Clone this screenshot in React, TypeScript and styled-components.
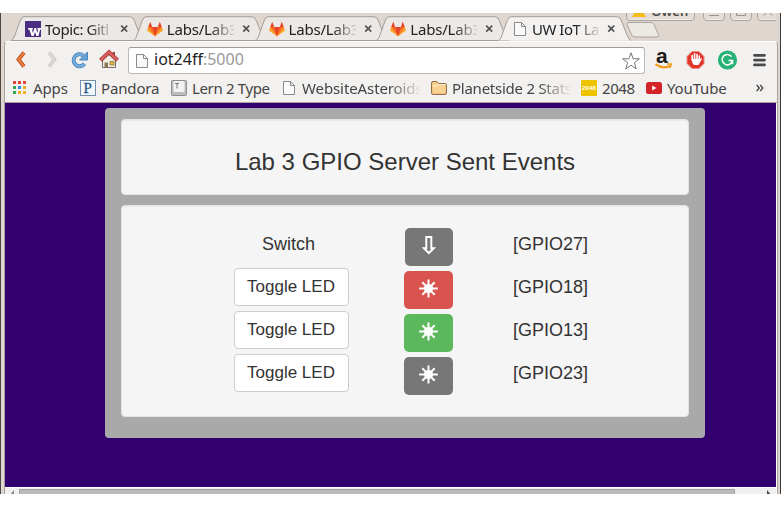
import React from 'react';
import styled, { createGlobalStyle } from 'styled-components';

const GlobalStyle = createGlobalStyle`
  * { box-sizing: border-box; }
  body { margin: 0; background: #fff; }
  svg { display: block; flex: none; }
`;

const Screen = styled.div`
  width: 781px;
  height: 507px;
  padding-top: 13px;
  overflow: hidden;
  background: #fff;
  font-family: 'Noto Sans', 'Open Sans', sans-serif;
  color: #333;
`;

const Window = styled.div`
  height: 481px;
  overflow: hidden;
  background: #dfd6cf;
  border-left: 1px solid #4a4744;
  border-right: 1px solid #3d3b3a;
  padding: 0 2px 0 3px;
  display: flex;
  flex-direction: column;
`;

const TabStrip = styled.div`
  height: 28px;
  display: flex;
  padding-left: 7px;
  flex: none;
`;

const TabBox = styled.div<{ $active?: boolean }>`
  position: relative;
  z-index: ${p => (p.$active ? 2 : 1)};
  width: 133px;
  height: 28px;
  margin-right: -11.25px;
  padding: 3px 0 0 14px;
  display: flex;
  align-items: center;
  flex: none;
`;

const TabShape = styled.svg`
  position: absolute;
  left: 0;
  top: 3px;
`;

const TabIcon = styled.div`
  position: relative;
  width: 16px;
  margin-right: 4px;
`;

const TabTitle = styled.div<{ $spacing: number }>`
  position: relative;
  width: 67px;
  height: 22px;
  line-height: 22px;
  overflow: hidden;
  white-space: nowrap;
  font-size: 15px;
  letter-spacing: ${p => p.$spacing}px;
  color: #222;
  mask-image: linear-gradient(to right, #000 43px, transparent 70px);
`;

const CloseIcon = styled.svg`
  position: relative;
  margin-left: 8px;
`;

const StripEnd = styled.div`
  margin-left: 6px;
  width: 150px;
  display: flex;
  flex-direction: column;
  gap: 1px;
`;

const WindowControls = styled.div`
  height: 8px;
  overflow: hidden;
  display: flex;
  align-items: flex-end;
  gap: 5px;
`;

const ControlButton = styled.div<{ $width: number; $gap?: number }>`
  width: ${p => p.$width}px;
  height: 20px;
  margin-right: ${p => p.$gap ?? 0}px;
  border: 1px solid #aaa39e;
  border-radius: 4px;
  background: #e4ddd7;
  display: flex;
  align-items: flex-end;
  justify-content: center;
  flex: none;
  box-shadow: inset 0 -1px #f1ece8;
`;

const UserName = styled.span`
  font-size: 13px;
  font-weight: 600;
  line-height: 17px;
  margin-left: 5px;
  color: #4d4947;
`;

const Toolbar = styled.div`
  height: 33px;
  flex: none;
  padding: 5px 0 0 11px;
  display: flex;
  align-items: flex-start;
  background: #f3f1ef;
  border-top: 1px solid #fff;
  border-left: 1px solid #a8a19c;
  border-right: 1px solid #a8a19c;
  border-radius: 4px 4px 0 0;
`;

const NavIcons = styled.div`
  width: 112px;
  height: 26px;
  display: flex;
  align-items: center;
  flex: none;
`;

const AddressBar = styled.div`
  width: 517px;
  height: 27px;
  display: flex;
  align-items: center;
  padding: 0 4px 0 5px;
  background: #fff;
  border: 1px solid #bdb9b6;
  border-top-color: #9e9a97;
  border-radius: 3px;
  flex: none;
`;

const Address = styled.div`
  flex: 1;
  margin-left: 4px;
  padding-bottom: 3px;
  font-size: 16px;
  line-height: 24px;
  color: #222;
`;

const Port = styled.span`
  color: #999;
`;

const Extensions = styled.div`
  display: flex;
  align-items: center;
  height: 26px;
  padding-left: 9px;
`;

const BookmarkBar = styled.div`
  height: 29px;
  flex: none;
  background: #f3f1ef;
  border: solid #a8a19c;
  border-width: 0 1px 1px;
  padding: 0 0 1px 8px;
  display: flex;
  align-items: center;
`;

const BookmarkItem = styled.div<{ $width: number }>`
  width: ${p => p.$width}px;
  display: flex;
  align-items: center;
  flex: none;
`;

const BookmarkText = styled.div<{ $spacing: number; $fade?: number }>`
  margin-left: 5px;
  height: 22px;
  line-height: 22px;
  font-size: 15px;
  letter-spacing: ${p => p.$spacing}px;
  white-space: nowrap;
  overflow: hidden;
  color: #444;
  ${p =>
    p.$fade
      ? `width: ${p.$fade}px; mask-image: linear-gradient(to right, #000 ${p.$fade - 32}px, transparent ${p.$fade + 2}px);`
      : ''}
`;

const Page = styled.main`
  height: 384px;
  margin-right: 2px;
  padding: 5px 0 0 100px;
  background: #330070;
  font-family: 'Liberation Sans', Arial, sans-serif;
`;

const PageFrame = styled.div`
  flex: none;
  background: linear-gradient(to right, #fff calc(100% - 1px), #a8a19c 0);
  border-left: 1px solid #a8a19c;
`;

const Container = styled.section`
  width: 600px;
  height: 330px;
  padding: 11px 16px;
  background: #a9a9a9;
  border-radius: 4px;
  display: flex;
  flex-direction: column;
  gap: 10px;
`;

const Well = styled.div<{ $height: number }>`
  height: ${p => p.$height}px;
  background: #f5f5f5;
  border: 1px solid #e3e3e3;
  border-radius: 4px;
  box-shadow: inset 0 1px 1px rgba(0, 0, 0, 0.05);
`;

const Heading = styled.h1`
  margin: 0;
  padding-top: 29px;
  font-size: 24px;
  font-weight: 400;
  line-height: 26px;
  text-align: center;
`;

const GpioGrid = styled.div`
  padding: 19px 0 0 112px;
  display: grid;
  grid-template-columns: 115px 104px 135px;
  grid-auto-rows: 43px;
  font-size: 18px;
`;

const SwitchLabel = styled.div`
  padding: 6px 0 0 28px;
  line-height: 26px;
`;

const ToggleButton = styled.button`
  width: 115px;
  height: 38px;
  padding: 0 1px 1px 0;
  font: 17px 'Liberation Sans', Arial, sans-serif;
  white-space: nowrap;
  color: #333;
  background: #fff;
  border: 1px solid #ccc;
  border-radius: 4px;
`;

const StateBadge = styled.div<{ $color: string; $narrow?: boolean }>`
  justify-self: end;
  width: ${p => (p.$narrow ? 48 : 49)}px;
  height: 38px;
  margin-top: 3px;
  padding-bottom: ${p => (p.$narrow ? 4 : 3)}px;
  display: flex;
  align-items: center;
  justify-content: center;
  background: ${p => p.$color};
  border-radius: 5px;
`;

const PinName = styled.div`
  padding: 6px 0 0 60px;
  line-height: 26px;
`;

const ScrollTrack = styled.div`
  height: 7px;
  margin-right: 2px;
  padding-top: 1px;
  border-top: 1px solid #fff;
  background: #f0efee;
  display: flex;
  justify-content: space-between;
`;

const ScrollThumb = styled.div`
  width: 716px;
  height: 12px;
  background: #bababa;
  border: 1px solid #a2a2a2;
`;

const FileIcon = () => (
  <svg width="16" height="16" viewBox="0 0 16 16" fill="#fafafa" stroke="#898989">
    <path d="M2.5 1.5h7l4 4v9h-11zM9.5 1.5v4h4" />
  </svg>
);

const UwIcon = () => (
  <svg width="16" height="16" viewBox="0 0 16 16">
    <path fill="#4b2e83" d="M0 0h16v16H0z" />
    <path fill="#fff" d="M3 7h4.800v1.500H7l.8 3.500L9.500 7h1.500l1.300 5 .9-3.500h-.9V7H16v1.500h-.8L13.400 15h-2L10 11 8.600 15h-2L4.300 8.500H3z" />
  </svg>
);

const GitlabIcon = () => (
  <svg width="16" height="16" viewBox="0 0 16 16">
    <path fill="#fca326" d="M1.200 6L0 9.500l8 5.800 8-5.800L14.800 6z" />
    <path fill="#fc6d26" d="M1.200 6L8 15.300 14.800 6z" />
    <path fill="#e24329" d="M1.200 6L3.200.8 5.200 6zM10.800 6l2-5.200 2 5.200zM5.200 6h5.600L8 15.300z" />
  </svg>
);

const Tab = ({ icon, title, spacing = -0.2, active }: { icon: React.ReactNode; title: string; spacing?: number; active?: boolean }) => (
  <TabBox $active={active}>
    <TabShape width="133" height="25" viewBox="0 0 133 25">
      <path
        d="M0 24.500C2 24 3 22 4 19L9 5Q10.500 .7 13 .7H119Q122 .7 123.500 5L129 19Q131 24 133 24.500"
        fill={active ? '#f3f1ef' : '#ece8e5'}
        stroke="#a39d98"
      />
      {!active && <path d="M0 24.500H133" stroke="#a39d98" />}
    </TabShape>
    <TabIcon>{icon}</TabIcon>
    <TabTitle $spacing={spacing}>{title}</TabTitle>
    <CloseIcon width="9" height="9" viewBox="0 0 9 9" stroke="#555" strokeWidth="1.700">
      <path d="M1.200 1.700l6 6m0-6l-6 6" />
    </CloseIcon>
  </TabBox>
);

const Bookmark = ({ icon, text, width, spacing, fade }: { icon: React.ReactNode; text: string; width: number; spacing: number; fade?: number }) => (
  <BookmarkItem $width={width}>
    {icon}
    <BookmarkText $spacing={spacing} $fade={fade}>{text}</BookmarkText>
  </BookmarkItem>
);

const AppsIcon = () => {
  const colors = ['#ea4335', '#ea4335', '#ea4335', '#34a853', '#2b8de0', '#f2b01e', '#34a853', '#f2b01e', '#f2b01e'];
  return (
    <svg width="15" height="14" viewBox="0 0 15 14">
      {colors.map((c, i) => (
        <rect key={i} x={(i % 3) * 5} y={Math.floor(i / 3) * 5} width="3" height="3" fill={c} />
      ))}
    </svg>
  );
};

const PandoraIcon = () => (
  <svg width="16" height="16" viewBox="0 0 16 16">
    <rect x=".5" y=".5" width="15" height="15" fill="#f5f8fb" stroke="#6e90ad" />
    <text x="3.500" y="13" fontFamily="Liberation Serif, serif" fontSize="15" fill="#2b5885" stroke="#2b5885" strokeWidth=".3">P</text>
  </svg>
);

const KeyIcon = () => (
  <svg width="16" height="16" viewBox="0 0 16 16">
    <rect x=".5" y=".5" width="15" height="15" rx="1" fill="#bcbcbc" stroke="#8e8e8e" />
    <rect x="2.500" y="1" width="11" height="11" rx="1" fill="#f2f2f2" />
    <path d="M4 3.500h4M6 3.500v5" stroke="#777" />
  </svg>
);

const FolderIcon = () => (
  <svg width="16" height="14" viewBox="0 0 16 14">
    <path d="M.6 12V2Q.6.6 2 .6h4l1.500 2H14q1.400 0 1.400 1.400v8q0 1.400-1.400 1.400H2Q.6 13.400 .6 12z" fill="#f9d291" stroke="#8b643a" />
    <path d="M1.500 5H5.500L7 3.500h7.500" fill="none" stroke="#fff0ce" />
  </svg>
);

const Icon2048 = () => (
  <svg width="16" height="16" viewBox="0 0 16 16">
    <rect width="16" height="16" rx="1" fill="#edc400" />
    <text x="8" y="10.300" textAnchor="middle" fontFamily="Liberation Sans, sans-serif" fontWeight="700" fontSize="6.200" fill="#fff">2048</text>
  </svg>
);

const YoutubeIcon = () => (
  <svg width="16" height="12" viewBox="0 0 16 12">
    <rect width="16" height="12" rx="2.500" fill="#d42428" />
    <path d="M6.200 3.400v5L10.500 5.900z" fill="#fff" />
  </svg>
);

const StarburstIcon = () => (
  <svg width="19" height="19" viewBox="-9.5 -9.5 19 19">
    <path d="M0-9V9M-9.300 0H9.300M-6.200-6.200L6.200 6.200M6.200-6.200L-6.200 6.200" stroke="#fff" strokeWidth="2" />
    <circle r="4.600" fill="#fff" />
  </svg>
);

const DownArrowIcon = () => (
  <svg width="14" height="20" viewBox="0 0 14 20" fill="none" stroke="#fff" strokeWidth="2">
    <path d="M4.300 1.900h5v11.300h2.500L6.800 18 1.800 13.200h2.500z" />
  </svg>
);

const Nav = () => (
  <NavIcons>
    <svg width="112" height="26" viewBox="0 0 112 26">
      <path d="M8 5.500L2.500 12.500 8 19.500" fill="none" stroke="#c04b16" strokeWidth="3.800" />
      <path d="M8 5.500L2.500 12.500 8 19.500" fill="none" stroke="#ef8447" strokeWidth="2" />
      <path d="M33 5.500L38.500 12.500 33 19.500" fill="none" stroke="#c9c5c2" strokeWidth="3.600" />
      <path d="M33 5.500L38.500 12.500 33 19.500" fill="none" stroke="#dedbd8" strokeWidth="2" />
      <path d="M68.500 16.800A6 6 0 1 1 67.300 8.500" fill="none" stroke="#4886bf" strokeWidth="4" />
      <path d="M68.500 16.800A6 6 0 1 1 67.300 8.500" fill="none" stroke="#76aedd" strokeWidth="2.300" />
      <path d="M71.500 5v8h-8z" fill="#69a2d4" stroke="#4886bf" />
      <path d="M86.500 12v8.500h13V12L93 6.500z" fill="#f1ede6" stroke="#777067" />
      <path d="M88.500 15.500h3.500v5h-3.500z" fill="#8e7852" />
      <path d="M94 14.500h4v3.500h-4z" fill="#e9b93c" stroke="#7d6939" strokeWidth=".7" />
      <path d="M96.500 5h2.500v5h-2.500z" fill="#9e4540" />
      <path d="M84.500 13.300L93 5.200l8.500 8.100" fill="none" stroke="#9d3034" strokeWidth="4" />
      <path d="M84.700 13L93 5.100l8.300 7.900" fill="none" stroke="#d9605f" strokeWidth="2.500" />
    </svg>
  </NavIcons>
);

const ExtensionIcons = () => (
  <Extensions>
    <svg width="113" height="26" viewBox="0 0 113 26">
      <text x="2" y="15.800" fontFamily="Liberation Sans, sans-serif" fontWeight="700" fontSize="21" fill="#1b1b1b">a</text>
      <path d="M1.500 17.200Q9 22.800 16 18.700" fill="none" stroke="#f29a20" strokeWidth="2.200" />
      <path d="M13 17h4.300l-1.300 4" fill="none" stroke="#f29a20" strokeWidth="1.500" />
      <path d="M38 4.500h7l5 5v7l-5 5h-7l-5-5v-7z" fill="#e3342c" stroke="#e98a82" strokeLinejoin="round" />
      <path d="M38.200 13V8.500M40.600 12V6.800M43 12V7.500M45.300 13V9" stroke="#fff" strokeWidth="1.600" strokeLinecap="round" />
      <path d="M37.500 12h8.600l1.400-1 .5 1-3.500 6h-4.500q-2-2-2.500-6z" fill="#fff" />
      <circle cx="73.500" cy="13" r="9.600" fill="#26b276" />
      <path d="M77.600 9.600A5.200 5.200 0 1 0 78.500 13.500H74.500M78.500 12.800v4.500" fill="none" stroke="#fff" strokeWidth="1.600" />
      <path d="M100.500 8.300h10M100.500 13.100h10M100.500 17.900h10" stroke="#494949" strokeWidth="2.800" strokeLinecap="round" />
    </svg>
  </Extensions>
);

const leds = [
  { pin: '[GPIO18]', color: '#d9534f' },
  { pin: '[GPIO13]', color: '#5cb85c' },
  { pin: '[GPIO23]', color: '#777' },
];

export default function App() {
  return (
    <>
      <GlobalStyle />
      <Screen>
        <Window>
          <TabStrip>
            <Tab icon={<UwIcon />} title="Topic: Gitl" spacing={-0.45} />
            <Tab icon={<GitlabIcon />} title="Labs/Lab3" />
            <Tab icon={<GitlabIcon />} title="Labs/Lab3" />
            <Tab icon={<GitlabIcon />} title="Labs/Lab3" />
            <Tab icon={<FileIcon />} title="UW IoT La" spacing={-0.5} active />
            <StripEnd>
              <WindowControls>
                <ControlButton $width={69} $gap={3}>
                  <svg width="14" height="17" viewBox="0 0 14 17"><path d="M7 2l7 12H0z" fill="#f5bd16" /></svg>
                  <UserName>Owen</UserName>
                </ControlButton>
                <ControlButton $width={22}>
                  <svg width="12" height="18" stroke="#99928d" fill="none"><path d="M1 13.500h10" /></svg>
                </ControlButton>
                <ControlButton $width={22}>
                  <svg width="12" height="18" stroke="#99928d" fill="none"><path d="M1.500 5.500h9v8h-9z" /></svg>
                </ControlButton>
                <ControlButton $width={22}>
                  <svg width="12" height="18" stroke="#99928d" fill="none"><path d="M1.500 13.500l9-9m0 9l-9-9" /></svg>
                </ControlButton>
              </WindowControls>
              <svg width="34" height="16" viewBox="0 0 34 16">
                <path d="M3 .5h22q2 0 3 2l4.500 10q1 2.500-1.500 2.500H9q-2.500 0-3.500-2.500L1.200 3Q.5 .5 3 .5z" fill="#ece8e4" stroke="#aaa39e" />
              </svg>
            </StripEnd>
          </TabStrip>
          <Toolbar>
            <Nav />
            <AddressBar>
              <FileIcon />
              <Address>iot24ff<Port>:5000</Port></Address>
              <svg width="18" height="18" viewBox="0 0 18 18" fill="#fff" stroke="#777" strokeLinejoin="round">
                <path d="M9 .8l2.200 6h6.200l-5 3.900 1.800 6.200L9 13.200l-5.200 3.700 1.800-6.200-5-3.900h6.200z" />
              </svg>
            </AddressBar>
            <ExtensionIcons />
          </Toolbar>
          <BookmarkBar>
            <Bookmark icon={<AppsIcon />} text="Apps" width={67} spacing={-0.1} />
            <Bookmark icon={<PandoraIcon />} text="Pandora" width={91} spacing={-0.15} />
            <Bookmark icon={<KeyIcon />} text="Lern 2 Type" width={110} spacing={-0.35} />
            <Bookmark icon={<FileIcon />} text="WebsiteAsteroids" width={150} spacing={-0.1} fade={118} />
            <Bookmark icon={<FolderIcon />} text="Planetside 2 Stats" width={150} spacing={-0.25} fade={118} />
            <Bookmark icon={<Icon2048 />} text="2048" width={65} spacing={-0.4} />
            <Bookmark icon={<YoutubeIcon />} text="YouTube" width={110} spacing={-0.15} />
            <svg width="8" height="8" viewBox="0 0 8 8" fill="none" stroke="#444" strokeWidth="1.300">
              <path d="M.7 1l2.600 3-2.600 3M4.200 1l2.600 3-2.600 3" />
            </svg>
          </BookmarkBar>
          <PageFrame>
            <Page>
              <Container>
                <Well $height={76}>
                  <Heading>Lab 3 GPIO Server Sent Events</Heading>
                </Well>
                <Well $height={212}>
                  <GpioGrid>
                    <SwitchLabel>Switch</SwitchLabel>
                    <StateBadge $color="#777" $narrow><DownArrowIcon /></StateBadge>
                    <PinName>[GPIO27]</PinName>
                    {leds.map(led => (
                      <React.Fragment key={led.pin}>
                        <ToggleButton>Toggle LED</ToggleButton>
                        <StateBadge $color={led.color}><StarburstIcon /></StateBadge>
                        <PinName>{led.pin}</PinName>
                      </React.Fragment>
                    ))}
                  </GpioGrid>
                </Well>
              </Container>
            </Page>
            <ScrollTrack>
              <svg width="14" height="10" viewBox="0 0 14 10"><path d="M9 1v5H5z" fill="#888" /></svg>
              <ScrollThumb />
              <svg width="41" height="10" viewBox="0 0 41 10"><path d="M32 1v5h4z" fill="#444" /></svg>
            </ScrollTrack>
          </PageFrame>
        </Window>
      </Screen>
    </>
  );
}
